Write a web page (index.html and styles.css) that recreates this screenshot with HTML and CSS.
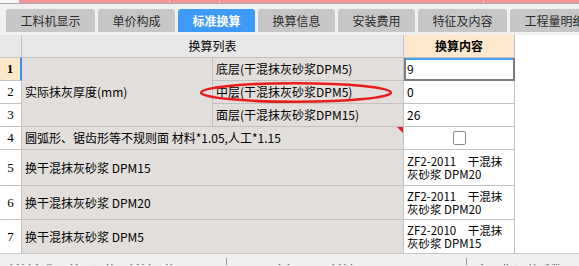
FILE: index.html
```html
<!DOCTYPE html>
<html lang="zh-CN">
<head>
<meta charset="utf-8">
<title>标准换算</title>
<link rel="stylesheet" href="styles.css">
</head>
<body>
<div class="strip">
  <span class="seg seg-a"></span>
  <span class="seg seg-b"></span>
  <span class="seg seg-c"></span>
  <span class="seg seg-d"></span>
  <span class="seg seg-e"></span>
  <span class="seg seg-f"></span>
</div>
<div class="tabs">
  <div class="tab wide">工料机显示</div>
  <div class="tab">单价构成</div>
  <div class="tab active">标准换算</div>
  <div class="tab">换算信息</div>
  <div class="tab">安装费用</div>
  <div class="tab wide">特征及内容</div>
  <div class="tab wide">工程量明细</div>
</div>
<div class="gridwrap">
  <div class="grid">
    <div class="c rn hd"></div>
    <div class="c hd span2 center">换算列表</div>
    <div class="c hd peach center bold">换算内容</div>
    <div class="blank"></div>

    <div class="c rn selrow bold">1</div>
    <div class="c data merged3">实际抹灰厚度(mm)</div>
    <div class="c data">底层(干混抹灰砂浆DPM5)</div>
    <div class="c val selcell">9</div>

    <div class="c rn">2</div>
    <div class="c data">中层(干混抹灰砂浆DPM5)</div>
    <div class="c val">0</div>

    <div class="c rn">3</div>
    <div class="c data">面层(干混抹灰砂浆DPM15)</div>
    <div class="c val">26</div>

    <div class="c rn">4</div>
    <div class="c data span2 note">圆弧形、锯齿形等不规则面 材料*1.05,人工*1.15</div>
    <div class="c val center"><span class="checkbox"></span></div>

    <div class="c rn">5</div>
    <div class="c data span2">换干混抹灰砂浆 DPM15</div>
    <div class="c val two"><span class="ln">ZF2-2011　干混抹</span><span class="ln">灰砂浆 DPM20</span></div>

    <div class="c rn">6</div>
    <div class="c data span2">换干混抹灰砂浆 DPM20</div>
    <div class="c val two"><span class="ln">ZF2-2011　干混抹</span><span class="ln">灰砂浆 DPM20</span></div>

    <div class="c rn">7</div>
    <div class="c data span2">换干混抹灰砂浆 DPM5</div>
    <div class="c val two"><span class="ln">ZF2-2010　干混抹</span><span class="ln">灰砂浆 DPM15</span></div>
  </div>
  <svg class="ring" width="200" height="24" viewBox="0 0 200 24">
    <ellipse cx="98" cy="11.5" rx="95" ry="9.3" fill="none" stroke="#e81c1c" stroke-width="2.6"/>
  </svg>
</div>
<div class="bottom">
  <div class="bgroup g1">
    <span>材料名称</span><span>单价调整</span><span>材料价格</span>
  </div>
  <div class="bgroup g2">
    <span>显示对应子目</span><span>材料</span>
  </div>
  <div class="bgroup g3">
    <span>人工费 调整系数</span>
  </div>
</div>
</body>
</html>
```

FILE: styles.css
```css
* { box-sizing: border-box; }
html, body {
  margin: 0;
  padding: 0;
}
body {
  width: 579px;
  height: 266px;
  overflow: hidden;
  background: #f0f0f0;
  font-family: "Noto Sans CJK SC", "Noto Sans", sans-serif;
  font-size: 12px;
  color: #000;
}

/* top strip */
.strip {
  display: flex;
  height: 4px;
  border-bottom: 1px solid #a9a9a9;
}
.seg { height: 3px; background: #f39494; }
.seg-a { width: 19px; background: #f6f6f6; }
.seg-b { width: 19px; border-right: 1px solid #f6b26c; }
.seg-c { width: 132px; border-right: 1px solid #f8c4c4; }
.seg-d { width: 50px; border-right: 1px solid #f8c4c4; }
.seg-e { width: 264px; border-right: 1px solid #f8c4c4; }
.seg-f { flex: 1; }

/* tabs */
.tabs {
  display: flex;
  gap: 3px;
  padding-left: 6px;
  margin-top: 5px;
  height: 23px;
  white-space: nowrap;
}
.tab {
  flex: none;
  width: 77px;
  height: 23px;
  background: #c6c6c6;
  border-radius: 3px 3px 0 0;
  color: #2b2b2b;
  font-size: 12px;
  line-height: 23px;
  text-align: center;
}
.tab.wide { width: 89px; }
.tab.active {
  background: #3d9bf7;
  color: #fff;
  font-weight: bold;
}

/* grid */
.gridwrap {
  position: relative;
  margin-top: 3px;
  height: 218px;
  overflow: hidden;
  background: #fff;
}
.grid {
  display: grid;
  grid-template-columns: 22px 191px 191px 111px 1fr;
  grid-template-rows: 23px 23px 23px 23px 23px 36px 34px 34px;
}
.c {
  border-right: 1px solid #c2c2c2;
  border-bottom: 1px solid #c2c2c2;
  padding: 0 3px;
  display: flex;
  align-items: center;
  white-space: nowrap;
  overflow: hidden;
  line-height: 14px;
}
.blank {
  grid-column: 5;
  grid-row: 1 / 9;
  background: #fff;
}
.hd { background: #e7e7e7; }
.peach { background: #fde8cc; }
.center { justify-content: center; }
.bold { font-weight: bold; }
.span2 { grid-column: 2 / 4; }
.merged3 { grid-row: 2 / 5; grid-column: 2; }
.rn {
  background: #fff;
  justify-content: center;
  padding: 0;
  font-family: "Liberation Serif", serif;
  font-size: 13px;
}
.rn.hd { background: #e7e7e7; }
.rn.selrow {
  background: #fde8cc;
  border-right: 2px solid #3d8fe8;
}
.data { background: #e2dedb; }
.val { background: #fff; }
.two {
  flex-direction: column;
  align-items: flex-start;
  justify-content: center;
}
.ln {
  display: block;
  height: 12.5px;
  line-height: 12.5px;
  font-size: 11.5px;
}
.selcell {
  box-shadow: inset 2px 0 0 #7b7b7b, inset -1px 0 0 #7b7b7b, inset 0 -1px 0 #7b7b7b, inset 0 2px 0 #4a9cf0;
  border-right: 1px solid #7b7b7b;
  border-bottom: 1px solid #7b7b7b;
}
.note { position: relative; }
.note::after {
  content: "";
  position: absolute;
  top: 0;
  right: 0;
  border-top: 6px solid #e41b1b;
  border-left: 6px solid transparent;
}
.checkbox {
  display: block;
  width: 13px;
  height: 14px;
  border: 1px solid #8a8a8a;
  border-radius: 2px;
  background: #fff;
}
.ring {
  position: absolute;
  left: 198px;
  top: 46px;
}

/* bottom panel */
.bottom {
  display: flex;
  height: 12px;
  border-top: 1px solid #c8c8c8;
  background: #f0f0f0;
  padding-top: 10px;
  line-height: 12px;
  color: #222;
  white-space: nowrap;
  overflow: hidden;
}
.bgroup {
  display: flex;
  gap: 12px;
  height: 20px;
}
.g1 { width: 226px; padding-left: 8px; }
.g2 { width: 240px; padding-left: 19px; border-left: 1px solid #999; margin-top: -6px; padding-top: 6px; }
.g3 { flex: 1; padding-left: 9px; border-left: 1px solid #999; margin-top: -6px; padding-top: 6px; }
```
